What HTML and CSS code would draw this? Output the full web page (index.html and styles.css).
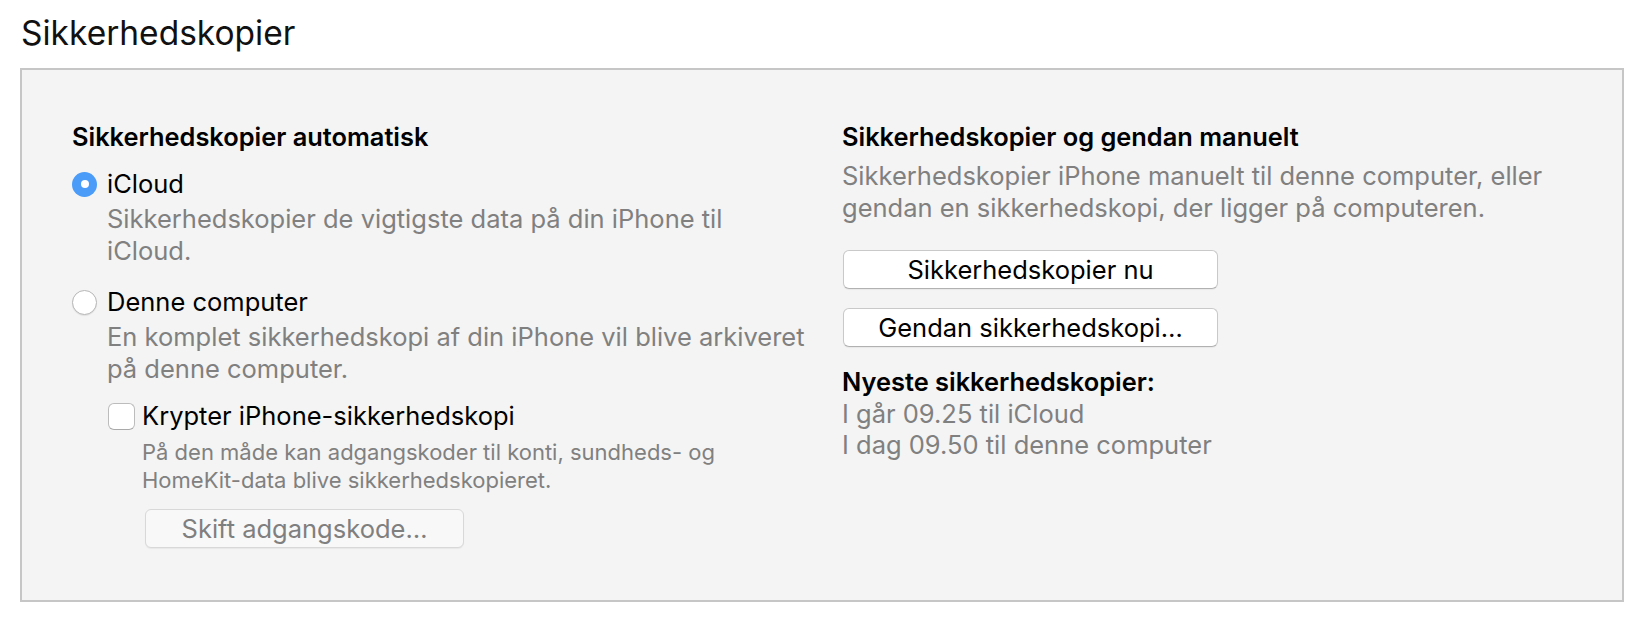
FILE: index.html
```html
<!DOCTYPE html>
<html lang="da">
<head>
  <meta charset="UTF-8">
  <meta name="viewport" content="width=device-width, initial-scale=1">
  <title>Sikkerhedskopier</title>
  <link rel="stylesheet" href="styles.css">
</head>
<body>

  <h1 class="page-title">Sikkerhedskopier</h1>

  <section class="panel">

    <!-- Automatic backups -->
    <div class="col col-auto">
      <h2 class="col-heading">Sikkerhedskopier automatisk</h2>

      <div class="option">
        <span class="radio radio-on"></span>
        <span class="option-label">iCloud</span>
      </div>
      <p class="hint">Sikkerhedskopier de vigtigste data på din iPhone til<br>iCloud.</p>

      <div class="option option-second">
        <span class="radio"></span>
        <span class="option-label">Denne computer</span>
      </div>
      <p class="hint">En komplet sikkerhedskopi af din iPhone vil blive arkiveret<br>på denne computer.</p>

      <div class="option option-check">
        <span class="checkbox"></span>
        <span class="option-label">Krypter iPhone-sikkerhedskopi</span>
      </div>
      <p class="hint-small">På den måde kan adgangskoder til konti, sundheds- og<br>HomeKit-data blive sikkerhedskopieret.</p>

      <button class="mac-button mac-button-disabled" disabled>Skift adgangskode…</button>
    </div>

    <!-- Manual backups -->
    <div class="col col-manual">
      <h2 class="col-heading">Sikkerhedskopier og gendan manuelt</h2>
      <p class="hint hint-manual">Sikkerhedskopier iPhone manuelt til denne computer, eller<br>gendan en sikkerhedskopi, der ligger på computeren.</p>

      <button class="mac-button mac-button-wide">Sikkerhedskopier nu</button>
      <button class="mac-button mac-button-wide mac-button-next">Gendan sikkerhedskopi…</button>

      <h3 class="latest-heading">Nyeste sikkerhedskopier:</h3>
      <p class="latest-list">I går 09.25 til iCloud<br>I dag 09.50 til denne computer</p>
    </div>

  </section>

</body>
</html>
```

FILE: styles.css
```css
body {
  font-family: 'Inter', 'Liberation Sans', sans-serif;
  background-color: #ffffff;
  margin: 0;
  padding: 0;
  color: #000;
}
.page-title {
  font-size: 33.5px;
  font-weight: 400;
  line-height: 40px;
  margin: 13px 0 0 21px;
  color: #111;
}
.panel {
  display: flex;
  margin: 15px 0 0 20px;
  width: 1604px;
  height: 534px;
  box-sizing: border-box;
  border: 2px solid #c6c6c6;
  background-color: #f4f4f4;
  padding: 52px 0 0 50px;
}
.col {
  display: flex;
  flex-direction: column;
  align-items: flex-start;
}
.col-auto {
  width: 770px;
}
.col-heading {
  font-size: 25.4px;
  font-weight: 600;
  line-height: 30px;
  margin: 0;
}
.option {
  display: flex;
  align-items: center;
  gap: 10px;
  height: 30px;
  margin-top: 17px;
  font-size: 25.5px;
}
.option-second {
  margin-top: 20px;
}
.option-check {
  margin-top: 16px;
  margin-left: 36px;
  gap: 7px;
}
.option-label {
  line-height: 30px;
  white-space: nowrap;
}
.radio {
  width: 25px;
  height: 25px;
  box-sizing: border-box;
  border-radius: 50%;
  border: 1px solid #b6b6b6;
  background-color: #fff;
  box-shadow: 0 1px 1px rgba(0, 0, 0, 0.08);
  position: relative;
}
.radio-on {
  border: none;
  background-color: #4a9cf8;
  box-shadow: none;
}
.radio-on::after {
  content: '';
  position: absolute;
  left: 50%;
  top: 50%;
  width: 8px;
  height: 8px;
  margin: -4px 0 0 -4px;
  border-radius: 50%;
  background-color: #fff;
}
.checkbox {
  width: 27px;
  height: 27px;
  box-sizing: border-box;
  border-radius: 6px;
  border: 1px solid #bcbcbc;
  border-bottom-color: #a9a9a9;
  background-color: #fff;
}
.hint {
  font-size: 25.5px;
  line-height: 32px;
  color: #808080;
  margin: 4px 0 0 35px;
  white-space: nowrap;
}
.hint-small {
  font-size: 22px;
  line-height: 28px;
  color: #808080;
  margin: 7px 0 0 70px;
  white-space: nowrap;
}
.hint-manual {
  margin: 8px 0 0 0;
}
.mac-button {
  font-family: inherit;
  font-size: 25.5px;
  color: #000;
  background-color: #fff;
  border: 1px solid #c9c9c9;
  border-bottom-color: #b1b1b1;
  border-radius: 6px;
  box-shadow: 0 1px 1px rgba(0, 0, 0, 0.05);
  padding: 0;
  height: 39px;
  line-height: 36px;
}
.mac-button-disabled {
  width: 319px;
  margin: 15px 0 0 73px;
  color: #7f7f7f;
  background-color: #f8f8f8;
  border-color: #d8d8d8;
}
.mac-button-wide {
  width: 375px;
  height: 39px;
  margin-top: 26px;
  margin-left: 1px;
}
.mac-button-next {
  margin-top: 19px;
}
.latest-heading {
  font-size: 25.4px;
  font-weight: 600;
  line-height: 30px;
  margin: 20px 0 0 0;
}
.latest-list {
  font-size: 25.5px;
  line-height: 31px;
  color: #808080;
  margin: 1px 0 0 0;
  white-space: nowrap;
}
```
